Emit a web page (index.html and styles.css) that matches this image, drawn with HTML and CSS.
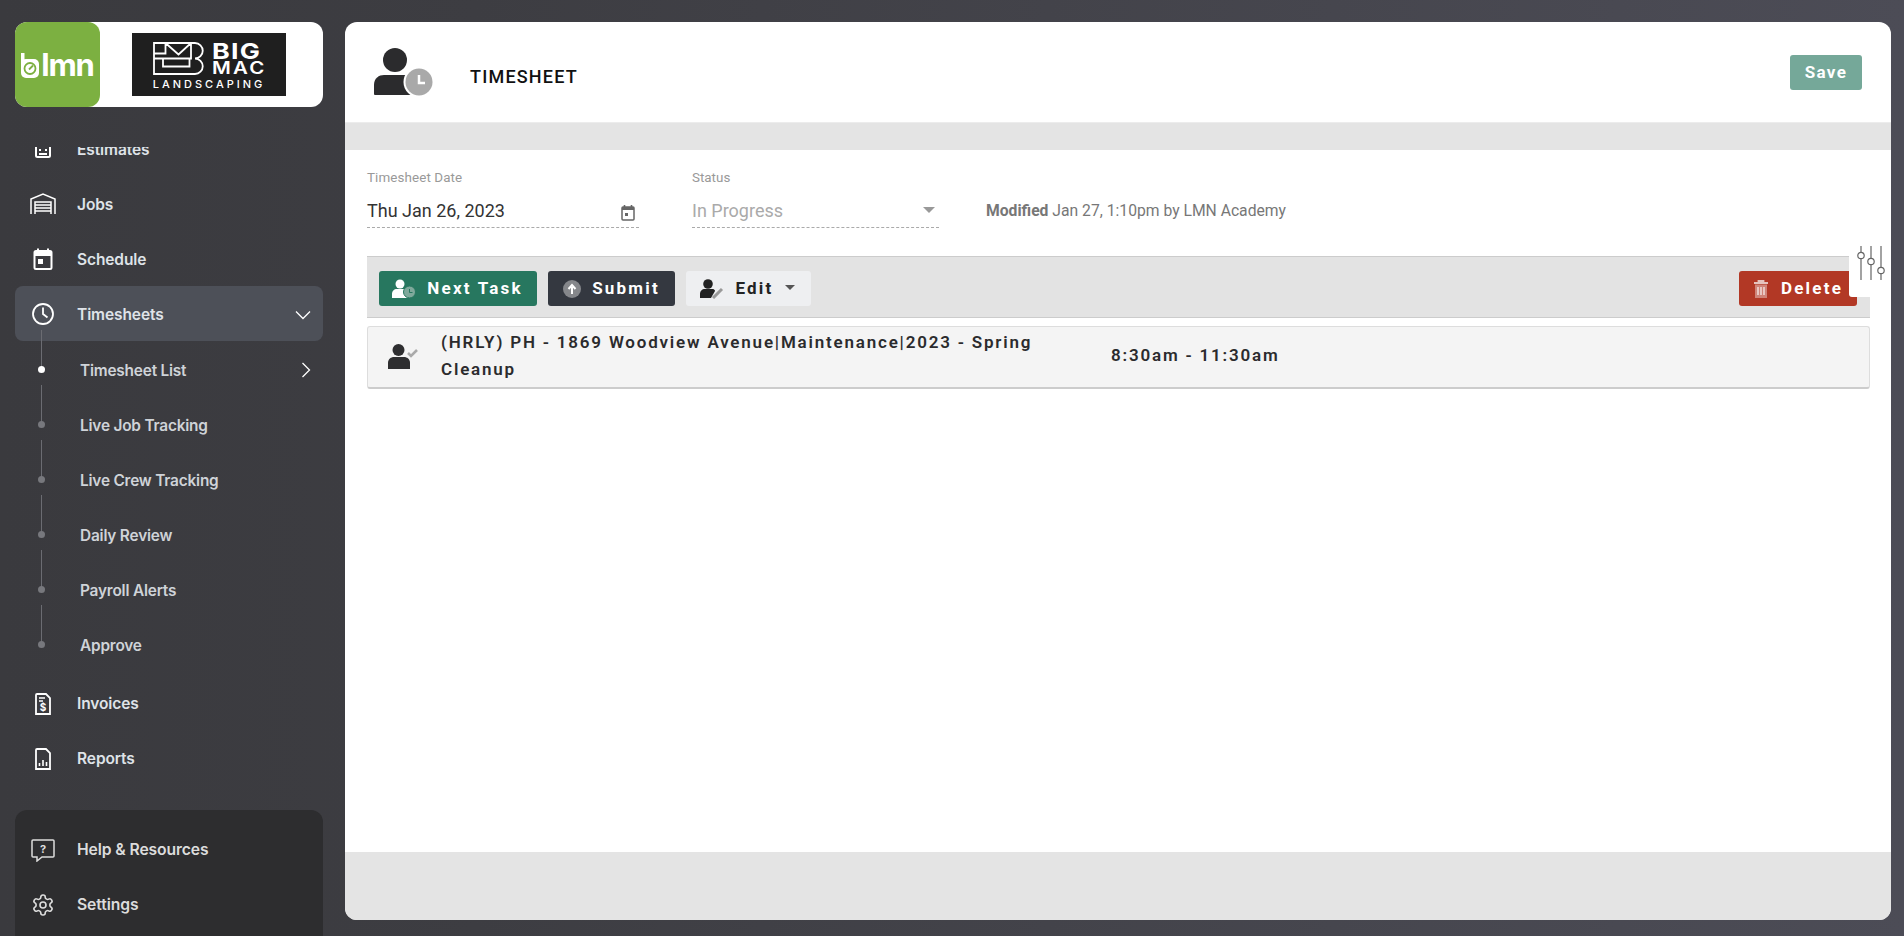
FILE: index.html
```html
<!DOCTYPE html>
<html lang="en">
<head>
<meta charset="utf-8">
<title>Timesheet</title>
<link rel="stylesheet" href="styles.css">
</head>
<body>
<aside class="sidebar">
  <div class="brand">
    <div class="lmn">
      <svg class="lmn-icon" viewBox="0 0 18 26"><rect x="0" y="1" width="3.500" height="12" fill="#fff"/><rect x="0" y="7" width="18" height="19" rx="5" fill="#fff"/><circle cx="9" cy="16.500" r="5.500" fill="none" stroke="#7cb041" stroke-width="1.800"/><path d="M8 17.500l4-4" stroke="#7cb041" stroke-width="1.800"/></svg>
      <span class="lmn-text">lmn</span>
    </div>
    <div class="bigmac">
      <div class="bm-top">
        <svg class="bm-mark" viewBox="0 0 51 33"><path d="M1 1h41a7.500 7.500 0 0 1 0 15.500a7.500 7.500 0 0 1 0 15.500H1zM1 11.500h11.500V1M12.500 1l13 11.500L38 1v15.500H1M10 16.500v8h26.500v-8" fill="none" stroke="#fff" stroke-width="1.800"/></svg>
        <div class="bm-name"><span class="bm-big">BIG</span><span class="bm-mac">MAC</span></div>
      </div>
      <div class="bm-land">LANDSCAPING</div>
    </div>
  </div>
  <nav class="nav">
    <div class="nav-inner">
      <a class="item"><span class="ico"><svg viewBox="0 0 24 24" fill="none" stroke="#fff" stroke-width="2"><rect x="5" y="4" width="14" height="16" rx="1.500"/><path d="M8 13h2M14 13h2M8 17h8"/></svg></span><span>Estimates</span></a>
      <a class="item"><span class="ico"><svg viewBox="0 0 26 22" fill="none" stroke="#fff" stroke-width="1.500"><path d="M1 21V6l12-5 12 5v15M5 21V9h16v12M5 12h16M5 15h16M5 18h16"/></svg></span><span>Jobs</span></a>
      <a class="item"><span class="ico"><svg viewBox="0 0 24 24"><path d="M7 1.500v3M17 1.500v3" stroke="#fff" stroke-width="2"/><rect x="3.500" y="4" width="17" height="18" rx="1.500" fill="none" stroke="#fff" stroke-width="2"/><path d="M3.500 5h17v4h-17z" fill="#fff"/><rect x="7" y="12" width="5" height="5" fill="#fff"/></svg></span><span>Schedule</span></a>
      <a class="item active"><span class="ico"><svg viewBox="0 0 24 24" fill="none" stroke="#fff" stroke-width="1.800"><circle cx="12" cy="12" r="10"/><path d="M12 5.500V12l4.500 3.500"/></svg></span><span class="grow">Timesheets</span><svg class="chev" viewBox="0 0 16 10" fill="none" stroke="#fff" stroke-width="1.300"><path d="M1 1.500l7 7 7-7"/></svg></a>
      <div class="subs">
        <a class="sub on"><span class="grow">Timesheet List</span><svg class="chev-r" viewBox="0 0 10 16" fill="none" stroke="#fff" stroke-width="1.300"><path d="M1.500 1l7 7-7 7"/></svg></a>
        <a class="sub"><span>Live Job Tracking</span></a>
        <a class="sub"><span>Live Crew Tracking</span></a>
        <a class="sub"><span>Daily Review</span></a>
        <a class="sub"><span>Payroll Alerts</span></a>
        <a class="sub"><span>Approve</span></a>
      </div>
      <a class="item"><span class="ico"><svg viewBox="0 0 24 24" fill="none" stroke="#fff" stroke-width="1.800"><path d="M6 2h9l4 4v16H5V3a1 1 0 0 1 1-1z"/><path d="M8 6h6M8 9h4" stroke-width="1.300"/><text x="12" y="19" class="doc-s">$</text></svg></span><span>Invoices</span></a>
      <a class="item"><span class="ico"><svg viewBox="0 0 24 24" fill="none" stroke="#fff" stroke-width="1.800"><path d="M6 2h9l4 4v16H5V3a1 1 0 0 1 1-1z"/><path d="M8.500 19v-3M12 19v-6M15.500 19v-4" stroke-width="1.600"/></svg></span><span>Reports</span></a>
    </div>
  </nav>
  <div class="bottom">
    <a class="item soft"><span class="ico"><svg viewBox="0 0 24 24" fill="none" stroke="#ddd" stroke-width="1.500"><path d="M2 2h20a1 1 0 0 1 1 1v15a1 1 0 0 1-1 1H11l-5 4v-4H2a1 1 0 0 1-1-1V3a1 1 0 0 1 1-1z"/><text x="12" y="15" class="help-q">?</text></svg></span><span>Help &amp; Resources</span></a>
    <a class="item soft"><span class="ico"><svg viewBox="0 0 24 24" fill="none" stroke="#ddd" stroke-width="1.600"><circle cx="12" cy="12" r="3"/><path d="M12.220 2h-.44a2 2 0 0 0-2 2v.18a2 2 0 0 1-1 1.730l-.43.25a2 2 0 0 1-2 0l-.15-.08a2 2 0 0 0-2.730.73l-.22.38a2 2 0 0 0 .73 2.730l.15.1a2 2 0 0 1 1 1.720v.51a2 2 0 0 1-1 1.740l-.15.09a2 2 0 0 0-.73 2.730l.22.38a2 2 0 0 0 2.730.73l.15-.08a2 2 0 0 1 2 0l.43.25a2 2 0 0 1 1 1.730V20a2 2 0 0 0 2 2h.44a2 2 0 0 0 2-2v-.18a2 2 0 0 1 1-1.730l.43-.25a2 2 0 0 1 2 0l.15.08a2 2 0 0 0 2.730-.73l.22-.39a2 2 0 0 0-.73-2.730l-.15-.08a2 2 0 0 1-1-1.740v-.5a2 2 0 0 1 1-1.740l.15-.09a2 2 0 0 0 .73-2.730l-.22-.38a2 2 0 0 0-2.730-.73l-.15.08a2 2 0 0 1-2 0l-.43-.25a2 2 0 0 1-1-1.730V4a2 2 0 0 0-2-2z"/></svg></span><span>Settings</span></a>
  </div>
</aside>

<main class="main">
  <header class="head">
    <svg class="head-icon" viewBox="0 0 62 48">
      <circle cx="24" cy="12" r="12" fill="#2b2b2d"/>
      <path d="M3 46v-9c0-7 5-10 10-10h22c5 0 10 3 10 10v9a1 1 0 0 1-1 1H4a1 1 0 0 1-1-1z" fill="#2b2b2d"/>
      <circle cx="48" cy="34" r="15.500" fill="#fff"/>
      <circle cx="48" cy="34" r="13.500" fill="#a9a9a9"/>
      <path d="M48 27v8h6" fill="none" stroke="#fff" stroke-width="2.500"/>
    </svg>
    <h1 class="title">TIMESHEET</h1>
    <button class="btn save">Save</button>
  </header>
  <div class="band"></div>
  <section class="content">
    <div class="form">
      <div class="field date">
        <label class="lbl">Timesheet Date</label>
        <div class="val"><span>Thu Jan 26, 2023</span>
          <svg class="cal" viewBox="0 0 14 16"><path d="M3.500 0v2M10.500 0v2" stroke="#666" stroke-width="1.600"/><rect x="1" y="2" width="12" height="13" rx="1" fill="none" stroke="#666" stroke-width="1.500"/><path d="M1 2h12v3H1z" fill="#666"/><rect x="4" y="8" width="3" height="3" fill="#666"/></svg>
        </div>
      </div>
      <div class="field status">
        <label class="lbl">Status</label>
        <div class="val muted"><span>In Progress</span><i class="caret"></i></div>
      </div>
      <p class="mod"><b>Modified</b> Jan 27, 1:10pm by LMN Academy</p>
    </div>
    <div class="toolbar">
      <button class="btn green">
        <svg class="bi" viewBox="0 0 26 20"><circle cx="9" cy="5" r="4.500" fill="#fff"/><path d="M1 19v-4c0-3 2-5 5-5h6c3 0 5 2 5 5v4z" fill="#fff"/><circle cx="18.500" cy="13" r="6" fill="#7fa99b" stroke="#27775f"/><path d="M18.500 10v3.500h3" fill="none" stroke="#27775f" stroke-width="1"/></svg>
        Next Task</button>
      <button class="btn dark">
        <svg class="bu" viewBox="0 0 18 18"><circle cx="9" cy="9" r="9" fill="#85878b"/><path d="M9 14V7M5.500 9L9 5l3.500 4" fill="none" stroke="#fff" stroke-width="2"/></svg>
        Submit</button>
      <button class="btn light">
        <svg class="bi" viewBox="0 0 26 20"><circle cx="9" cy="5" r="4.800" fill="#222"/><path d="M1 19v-4c0-3 2-5 5-5h7c3 0 3 2 3 2l-4 7z" fill="#222"/><path d="M14 19l9-9" stroke="#999" stroke-width="3"/></svg>
        Edit<i class="caret small"></i></button>
      <span class="grow"></span>
      <button class="btn red">
        <svg class="bt" viewBox="0 0 16 18"><path d="M1 3h14M5.500 2.500V1h5v1.500" stroke="#e6c4bd" stroke-width="1.800" fill="none"/><path d="M2 4.500h12V18H2z" fill="#cf8478"/><path d="M5 7v8M8 7v8M11 7v8" stroke="#fff" stroke-width="1.100"/></svg>
        Delete</button>
    </div>
    <div class="row">
      <svg class="ri" viewBox="0 0 32 26"><circle cx="11.500" cy="6" r="6" fill="#2e2e30"/><path d="M1 25v-6c0-4 3-6 6-6h10c3 0 6 2 6 6v6z" fill="#2e2e30"/><path d="M21 9l3 3 6-6" fill="none" stroke="#aaa" stroke-width="2.600"/></svg>
      <div class="job">(HRLY) PH - 1869 Woodview Avenue|Maintenance|2023 - Spring Cleanup</div>
      <div class="time">8:30am - 11:30am</div>
    </div>
    <div class="float">
      <svg viewBox="0 0 30 34" fill="none" stroke="#666" stroke-width="1.200"><path d="M5 0v6M5 13v21M15 0v12M15 19v15M25 0v21M25 28v6"/><circle cx="5" cy="9.500" r="3.200"/><circle cx="15" cy="15.500" r="3.200"/><circle cx="25" cy="24.500" r="3.200"/></svg>
    </div>
  </section>
  <div class="foot"></div>
</main>
</body>
</html>
```

FILE: styles.css
```css
* { box-sizing: border-box; }
html, body { height: 100%; }
body {
  margin: 0;
  height: 936px;
  overflow: hidden;
  display: flex;
  background: linear-gradient(90deg, #3a3a3e 0%, #3d3d42 25%, #4c4c56 100%);
  font-family: "Roboto", "Liberation Sans", sans-serif;
}
.grow { flex: 1; }

/* sidebar */
.sidebar {
  width: 345px;
  flex: none;
  height: 936px;
  padding: 22px 22px 0 15px;
  display: flex;
  flex-direction: column;
}
.brand {
  height: 85px;
  flex: none;
  background: #fff;
  border-radius: 12px;
  display: flex;
  align-items: center;
}
.lmn {
  width: 85px;
  height: 85px;
  background: #7cb041;
  border-radius: 12px;
  display: flex;
  align-items: center;
  justify-content: center;
  gap: 2px;
  color: #fff;
}
.lmn-icon { width: 18px; height: 26px; margin-top: 1px; }
.lmn-text { font: 700 31px/1 "Inter", sans-serif; letter-spacing: -1.200px; margin-top: -1px; }
.bigmac {
  width: 154px;
  height: 63px;
  margin-left: 32px;
  background: #1f1f1f;
  color: #fff;
  display: flex;
  flex-direction: column;
  align-items: center;
  padding-top: 9px;
}
.bm-top { display: flex; gap: 8px; height: 33px; }
.bm-mark { width: 51px; height: 33px; }
.bm-name { width: 54px; display: flex; flex-direction: column; font-family: "Inter", sans-serif; font-weight: 700; line-height: 1; }
.bm-big { font-size: 22px; line-height: 19px; letter-spacing: 1px; transform: scaleX(1.220); transform-origin: left center; }
.bm-mac { font-size: 17px; line-height: 14px; letter-spacing: 1.800px; font-weight: 600; transform: scaleX(1.200); transform-origin: left center; }
.bm-land { font: 500 11px/12px "Inter", sans-serif; letter-spacing: 3px; margin-top: 3px; }

.nav { height: 663px; margin-top: 40px; overflow: hidden; flex: none; }
.nav-inner { margin-top: -26px; }
.item {
  height: 55px;
  display: flex;
  align-items: center;
  padding: 0 12px 0 14px;
  color: #dfe3e8;
  font: 600 15.500px/1 "Inter", sans-serif;
  letter-spacing: -.1px;
}
.item > span:not(.ico) { margin-top: 2px; }
.subs ~ .item > span:not(.ico), .soft > span:not(.ico) { margin-top: 0; }
.item.soft { color: #dcdcdc; font-size: 15.700px; }
.ico { width: 28px; height: 28px; margin-right: 20px; display: flex; align-items: center; justify-content: center; flex: none; }
.ico svg { width: 26px; height: 24px; }
.active { background: #4d5058; border-radius: 8px; }
.chev { width: 16px; height: 10px; margin-top: 3px; }
.subs { margin: 1px 0 4px; }
.sub {
  position: relative;
  height: 55px;
  display: flex;
  align-items: center;
  padding: 2px 12px 0 65px;
  color: #cfd3d8;
  font: 600 15.400px/1 "Inter", sans-serif;
  letter-spacing: -.2px;
}
.sub::before {
  content: "";
  position: absolute;
  left: 26px;
  bottom: 27px;
  width: 1px;
  height: 40px;
  background: #6b6c72;
}
.sub::after {
  content: "";
  position: absolute;
  left: 23px;
  top: 24px;
  width: 7px;
  height: 7px;
  border-radius: 50%;
  background: #77787d;
}
.sub.on::after { background: #fff; }
.chev-r { width: 10px; height: 16px; margin-top: -2px; }
.doc-s { font: 700 10px "Inter", sans-serif; fill: #fff; stroke: none; text-anchor: middle; }
.help-q { font: 700 11px "Inter", sans-serif; fill: #ddd; stroke: none; text-anchor: middle; }
.bottom { flex: 1; background: #2d2d2f; border-radius: 12px 12px 0 0; padding-top: 12px; margin-top: 0; }

/* main */
.main {
  width: 1546px;
  height: 898px;
  margin-top: 22px;
  background: #fff;
  border-radius: 12px;
  overflow: hidden;
  display: flex;
  flex-direction: column;
}
.head {
  height: 100px;
  flex: none;
  display: flex;
  align-items: center;
  padding: 0 29px 0 26px;
}
.head-icon { width: 62px; height: 48px; }
.title {
  flex: 1;
  margin: 8px 0 0 37px;
  font-size: 18px;
  font-weight: 500;
  letter-spacing: 1.200px;
  color: #111;
}
.band { height: 28px; flex: none; background: #e4e4e4; border-top: 1px solid #ececec; }
.foot { height: 68px; flex: none; background: #e4e4e4; }
.content { flex: 1; position: relative; padding: 0 21px 0 22px; }

.btn {
  height: 35px;
  border: 0;
  border-radius: 3px;
  display: inline-flex;
  align-items: center;
  justify-content: center;
  font: 700 17px/1 "Roboto", sans-serif;
  letter-spacing: 2.200px;
  color: #fff;
  padding: 0;
}
.save { width: 72px; background: #75a899; letter-spacing: 1.400px; }
.green { width: 158px; background: #27775f; gap: 10px; padding-right: 2px; }
.dark { width: 127px; margin-left: 11px; background: #343840; gap: 11px; }
.light { width: 125px; margin-left: 11px; background: #eeeff1; color: #222; gap: 10px; padding-right: 3px; }
.red { width: 118px; background: #b23825; gap: 12px; }
.bi { width: 26px; height: 20px; }
.bu { width: 18px; height: 18px; }
.bt { width: 16px; height: 18px; }

.form { height: 106px; display: flex; align-items: flex-start; padding-top: 21px; }
.field { display: flex; flex-direction: column; }
.date { width: 272px; }
.status { width: 247px; margin-left: 53px; }
.lbl { font-size: 13.400px; line-height: 14px; color: #999; letter-spacing: .1px; }
.status .lbl { letter-spacing: 0; }
.val {
  height: 43px;
  padding: 15px 4px 0 0;
  display: flex;
  justify-content: space-between;
  font-size: 18px;
  line-height: 21px;
  color: #333;
  border-bottom: 1px dashed #aaa;
}
.muted { color: #aaa; }
.cal { width: 14px; height: 16px; margin-top: 5px; }
.caret { width: 0; height: 0; margin: 7px 0 0; border: 6.500px solid transparent; border-bottom: 0; border-top: 6px solid #999; }
.caret.small { margin: 0 0 3px 1px; border-width: 5px 5px 0; border-top-color: #555; }
.mod { margin: 32px 0 0 47px; font-size: 15.700px; line-height: 16px; color: #777; }

.toolbar {
  height: 62px;
  background: #e3e3e3;
  border-top: 1px solid #ccc;
  border-bottom: 1px solid #ccc;
  display: flex;
  align-items: center;
  padding: 3px 13px 0 12px;
}
.row {
  height: 63px;
  margin-top: 8px;
  background: #f4f4f4;
  border: 1px solid #ddd;
  border-bottom: 2px solid #ccc;
  border-radius: 3px;
  display: flex;
  align-items: center;
  padding-left: 19px;
  color: #2b2b2d;
  font-size: 17px;
  font-weight: 600;
  letter-spacing: 1.800px;
}
.ri { width: 32px; height: 26px; flex: none; }
.job { width: 692px; padding: 0 40px 2px 22px; line-height: 27px; flex: none; }
.time { margin-bottom: 4px; }

.float {
  position: absolute;
  right: 0;
  top: 78px;
  width: 42px;
  height: 69px;
  padding-left: 2px;
  background: #fff;
  border-radius: 3px 0 0 3px;
  display: flex;
  align-items: center;
  justify-content: center;
}
.float svg { width: 30px; height: 34px; }
```
